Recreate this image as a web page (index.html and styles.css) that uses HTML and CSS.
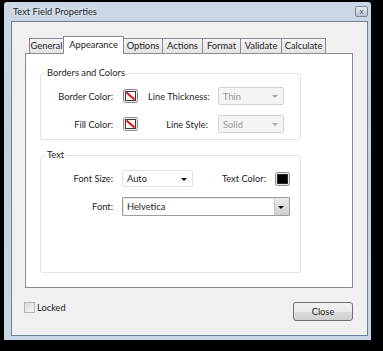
FILE: index.html
```html
<!DOCTYPE html>
<html lang="en">
<head>
  <meta charset="UTF-8">
  <title>Text Field Properties</title>
  <link rel="stylesheet" href="styles.css">
</head>
<body>

  <div class="screen">
    <div class="window">
      <div class="titlebar">
        <span class="title">Text Field Properties</span>
        <span class="close-x">x</span>
      </div>
      <div class="client">
        <div class="tabs">
          <div class="tab w-general">General</div>
          <div class="tab active w-appearance">Appearance</div>
          <div class="tab w-options">Options</div>
          <div class="tab w-actions">Actions</div>
          <div class="tab w-format">Format</div>
          <div class="tab w-validate">Validate</div>
          <div class="tab w-calculate">Calculate</div>
        </div>

        <div class="panel">
          <fieldset class="group group-borders">
            <legend>Borders and Colors</legend>
            <div class="grid borders-grid">
              <span class="label">Border Color:</span>
              <span class="swatch">
                <svg width="15" height="14" viewBox="0 0 15 14">
                  <rect x="0.5" y="0.5" width="14" height="13" rx="2" fill="#ececec" stroke="#8c8c8c"/>
                  <rect x="2.5" y="2.5" width="10" height="9" fill="#fff" stroke="#3c3c3c"/>
                  <line x1="3.5" y1="3.5" x2="11.5" y2="10.5" stroke="#e2141c" stroke-width="2.2"/>
                </svg>
              </span>
              <span class="label">Line Thickness:</span>
              <div class="select disabled">Thin<span class="arrow"></span></div>

              <span class="label">Fill Color:</span>
              <span class="swatch">
                <svg width="15" height="14" viewBox="0 0 15 14">
                  <rect x="0.5" y="0.5" width="14" height="13" rx="2" fill="#ececec" stroke="#8c8c8c"/>
                  <rect x="2.5" y="2.5" width="10" height="9" fill="#fff" stroke="#3c3c3c"/>
                  <line x1="3.5" y1="3.5" x2="11.5" y2="10.5" stroke="#e2141c" stroke-width="2.2"/>
                </svg>
              </span>
              <span class="label">Line Style:</span>
              <div class="select disabled">Solid<span class="arrow"></span></div>
            </div>
          </fieldset>

          <fieldset class="group group-text">
            <legend>Text</legend>
            <div class="grid text-grid">
              <span class="label">Font Size:</span>
              <div class="select light">Auto<span class="arrow"></span></div>
              <span class="label">Text Color:</span>
              <span class="swatch">
                <svg width="15" height="14" viewBox="0 0 15 14">
                  <rect x="0.5" y="0.5" width="14" height="13" rx="2" fill="#ececec" stroke="#8c8c8c"/>
                  <rect x="2.5" y="2.5" width="10" height="9" fill="#000" stroke="#2a2a2a"/>
                </svg>
              </span>

              <span class="label">Font:</span>
              <div class="select combo">Helvetica<span class="arrow-btn"><span class="arrow"></span></span></div>
            </div>
          </fieldset>
        </div>

        <div class="footer">
          <label class="check"><span class="box"></span>Locked</label>
          <button class="btn" type="button">Close</button>
        </div>
      </div>
    </div>
  </div>

</body>
</html>
```

FILE: styles.css
```css
* {
  box-sizing: border-box;
}
body {
  margin: 0;
  padding: 0;
  font-family: Lato, "Open Sans", Arial, sans-serif;
  font-size: 9.3px;
  color: #1e1e1e;
  background-color: #000;
}
.screen {
  width: 383px;
  height: 351px;
  padding: 2px 12px 11px 4px;
  background-color: #000;
}
.window {
  height: 100%;
  display: flex;
  flex-direction: column;
  padding: 0 3px 4px 7px;
  background: linear-gradient(180deg, #cbd7e6 0%, #c3d1e2 40%, #c9d6e5 100%);
  border-radius: 3px 3px 0 0;
}
.titlebar {
  height: 19px;
  display: flex;
  align-items: center;
  justify-content: space-between;
  padding: 0 0 0 2px;
}
.title {
  color: #23282f;
  text-shadow: 0 0 4px rgba(255, 255, 255, 0.9);
}
.close-x {
  width: 13px;
  height: 11px;
  border: 1px solid #7a8799;
  border-radius: 2px;
  background: linear-gradient(180deg, #e4e9f0, #b9c4d2);
  color: #56606e;
  font-size: 8px;
  line-height: 8px;
  text-align: center;
}
.client {
  flex: 1;
  border: 1px solid #6f8197;
  background-color: #f0f0f0;
  padding-top: 14px;
}

/* tabs */
.tabs {
  height: 17px;
  margin-left: 17px;
  display: flex;
  align-items: flex-end;
}
.tab {
  height: 15px;
  border: 1px solid #898c95;
  border-bottom: 0;
  border-left: 0;
  background: linear-gradient(180deg, #f3f3f3, #e3e3e3);
  text-align: center;
  line-height: 14px;
  white-space: nowrap;
}
.tab:first-child {
  border-left: 1px solid #898c95;
}
.tab.active {
  height: 18px;
  margin-bottom: -1px;
  border-left: 1px solid #898c95;
  background: #fff;
  position: relative;
  z-index: 1;
  line-height: 16px;
}
.w-general { width: 35px; }
.w-appearance { width: 61px; margin-left: -1px; }
.w-options { width: 39px; }
.w-actions { width: 40px; }
.w-format { width: 38px; }
.w-validate { width: 41px; }
.w-calculate { width: 44px; }

/* panel */
.panel {
  width: 328px;
  height: 235px;
  margin-left: 13px;
  border: 1px solid #898c95;
  background-color: #fff;
  padding: 13px 0 0 14px;
}
.group {
  width: 261px;
  margin: 0;
  border: 1px solid #dde3e7;
  border-radius: 3px;
  padding: 0;
}
.group legend {
  margin-left: 5px;
  padding: 0 1px;
  line-height: 12px;
}
.group-borders {
  padding: 8px 0 6px 0;
}
.group-text {
  margin-top: 9px;
  padding: 9px 10px 56px 0;
}
.grid {
  display: grid;
  align-items: center;
  column-gap: 10px;
  row-gap: 10px;
}
.borders-grid {
  grid-template-columns: 72px 15px 60px 66px;
  grid-auto-rows: 18px;
}
.text-grid {
  grid-template-columns: 72px 71px 1fr 15px;
  column-gap: 9px;
  grid-template-rows: 17px 19px;
}
.text-grid .combo {
  grid-column: 2 / 5;
}
.label {
  text-align: right;
  white-space: nowrap;
}
.swatch {
  display: flex;
}

/* dropdowns */
.select {
  height: 100%;
  position: relative;
  display: flex;
  align-items: center;
  padding-left: 4px;
  border-radius: 2px;
}
.select .arrow {
  position: absolute;
  right: 5px;
  top: 50%;
  margin-top: -1px;
  border-left: 3px solid transparent;
  border-right: 3px solid transparent;
  border-top: 3px solid #000;
}
.select.disabled {
  border: 1px solid #d2d2d2;
  background-color: #f4f4f4;
  color: #9a9a9a;
}
.select.disabled .arrow {
  border-top-color: #a8a8a8;
}
.select.light {
  border: 1px solid #e0e0e0;
  background-color: #fff;
}
.select.combo {
  border: 1px solid #9d9d9d;
  border-radius: 1px;
  background-color: #fff;
  box-shadow: inset 1px 1px 0 #e6e6e6;
}
.arrow-btn {
  position: absolute;
  right: 0;
  top: 0;
  bottom: 0;
  width: 15px;
  background: linear-gradient(180deg, #eaeaea, #cfcfcf);
  border-left: 1px solid #c4c4c4;
}

/* footer */
.footer {
  display: flex;
  justify-content: space-between;
  align-items: flex-start;
  margin-top: 14px;
  padding: 0 14px 0 12px;
}
.check {
  display: flex;
  align-items: center;
  gap: 2px;
}
.box {
  width: 11px;
  height: 11px;
  border: 1px solid #b8b8b8;
  background: linear-gradient(135deg, #d8d8d8, #f4f4f4);
}
.btn {
  width: 60px;
  height: 19px;
  font-family: inherit;
  font-size: 9.3px;
  color: #1e1e1e;
  border: 1px solid #707070;
  border-radius: 3px;
  background: linear-gradient(180deg, #f2f2f2 0%, #ebebeb 50%, #dddddd 51%, #cfcfcf 100%);
  padding: 0;
}
```
